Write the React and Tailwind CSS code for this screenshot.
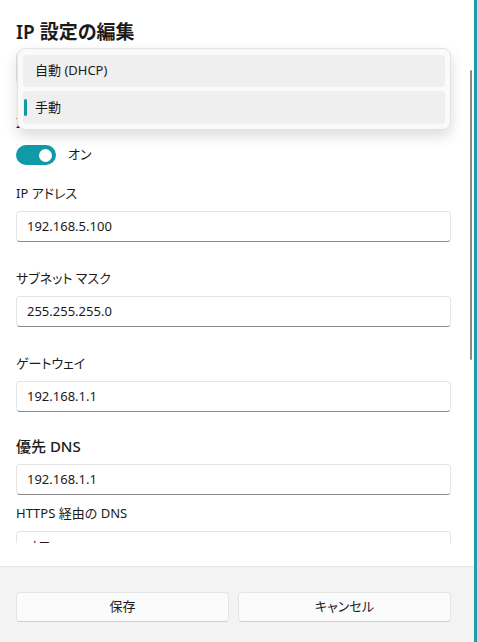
import React from "react";

const font = {
  fontFamily: '"Noto Sans", "Noto Sans CJK JP", sans-serif',
};

function Field({ label, value, bold, mt = "mt-[26px]" }) {
  return (
    <div className={mt}>
      <div
        className={
          bold
            ? "h-[20px] leading-[20px] text-[15px] font-medium text-[#1b1b1b]"
            : "h-[20px] leading-[20px] text-[13px] text-[#1b1b1b]"
        }
      >
        {label}
      </div>
      <div className="mt-2 h-[31px] rounded-[4px] border border-[#e5e5e5] border-b-[#8a8a8a] bg-white flex items-center px-[10px] text-[13px] text-[#1b1b1b]">
        {value}
      </div>
    </div>
  );
}

export default function App() {
  return (
    <div
      className="w-[477px] h-[642px] bg-white flex [font-feature-settings:'palt']"
      style={font}
    >
      <div className="w-[474px] h-full flex flex-col relative">
        <div className="h-[543px] overflow-hidden relative pl-4 pr-[23px]">
          <div className="pt-[18px] h-[46px] leading-[28px] text-[19px] font-semibold text-[#1b1b1b]">
            IP 設定の編集
          </div>
          <div className="mt-[6px] h-[32px] rounded-[4px] border border-[#e5e5e5] bg-[#fbfbfb]"></div>
          <div className="mt-[28px] h-[20px] leading-[20px] text-[15px] font-semibold text-[#1b1b1b]">
            IPv4
          </div>
          <div className="mt-[13px] flex items-center h-[20px]">
            <div className="w-[40px] h-[20px] rounded-full bg-[#0e9aa7] flex items-center justify-end pr-[4px]">
              <div className="w-[13px] h-[13px] rounded-full bg-white"></div>
            </div>
            <span className="ml-[12px] text-[13px] text-[#1b1b1b]">オン</span>
          </div>
          <Field label="IP アドレス" value="192.168.5.100" mt="mt-[18px]" />
          <Field label="サブネット マスク" value="255.255.255.0" />
          <Field label="ゲートウェイ" value="192.168.1.1" />
          <Field label="優先 DNS" value="192.168.1.1" bold mt="mt-[24px]" />
          <Field label="HTTPS 経由の DNS" value="オフ" mt="mt-[8px]" />
          <div className="h-[60px]"></div>

          {/* dropdown popup */}
          <div className="absolute left-[17px] top-[48px] w-[434px] h-[82px] rounded-[8px] border border-[#e3e3e3] bg-[#fafafa] shadow-[0_6px_14px_rgba(0,0,0,0.14)] p-[5px] pt-[6px] flex flex-col gap-[4px]">
            <div className="h-[32px] rounded-[4px] bg-[#efefef] flex items-center pl-[12px] text-[13px] text-[#1b1b1b]">
              自動 (DHCP)
            </div>
            <div className="relative h-[33px] rounded-[4px] bg-[#efefef] flex items-center pl-[12px] text-[13px] text-[#1b1b1b]">
              <div className="absolute left-[1px] top-[8px] w-[3px] h-[17px] rounded-full bg-[#0e9aa7]"></div>
              手動
            </div>
          </div>
        </div>
        <div className="h-[23px] bg-white"></div>
        <div className="flex-1 bg-[#f3f3f3] border-t border-[#e5e5e5] pl-4 pr-[23px] pt-[25px] flex gap-[9px]">
          <button className="flex-1 h-[30px] rounded-[4px] border border-[#e5e5e5] border-b-[#d0d0d0] bg-[#fbfbfb] text-[13px] text-[#1b1b1b]">
            保存
          </button>
          <button className="flex-1 h-[30px] rounded-[4px] border border-[#e5e5e5] border-b-[#d0d0d0] bg-[#fbfbfb] text-[13px] text-[#1b1b1b]">
            キャンセル
          </button>
        </div>
        {/* scrollbar */}
        <div className="absolute left-[470px] top-[70px] w-[2px] h-[290px] rounded-full bg-[#8b8b8b]"></div>
      </div>
      <div className="w-[3px] h-full bg-[#1aa0ad]"></div>
    </div>
  );
}
